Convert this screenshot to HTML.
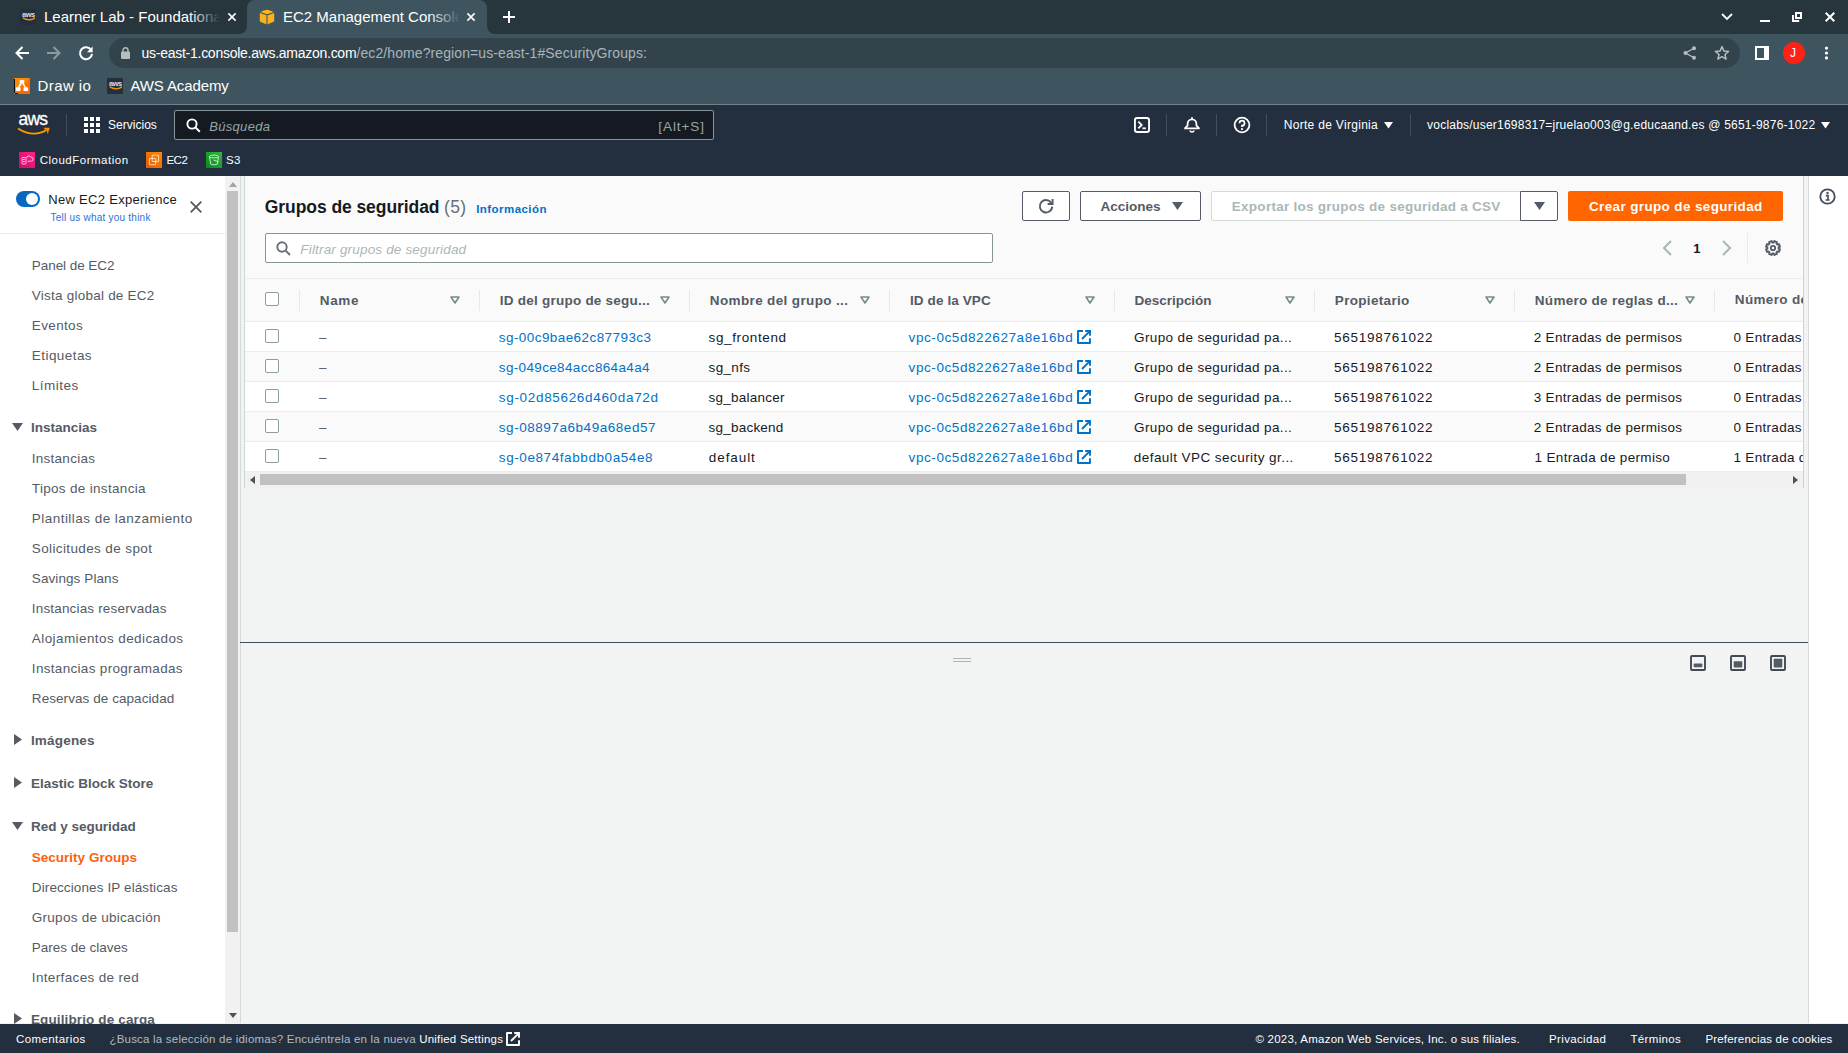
<!DOCTYPE html>
<html lang="es">
<head>
<meta charset="utf-8">
<title>EC2 Management Console</title>
<style>
*{box-sizing:border-box;margin:0;padding:0}
html,body{width:1848px;height:1053px;overflow:hidden;background:#f2f3f3}
body{font-family:"Liberation Sans",sans-serif;position:relative;color:#16191f}
.abs{position:absolute}
.t{position:absolute;white-space:nowrap;line-height:1}
svg{position:absolute;overflow:visible}
/* ---------- Chrome ---------- */
#tabbar{left:0;top:0;width:1848px;height:34px;background:#27353c}
#toolbar{left:0;top:34px;width:1848px;height:70px;background:#3e5560}
#tbline{left:0;top:104px;width:1848px;height:1px;background:#6d838c}
#acttab{left:247px;top:0;width:240px;height:34px;background:#3e5560;border-radius:8px 8px 0 0}
#omni{left:109px;top:38px;width:1631px;height:30px;border-radius:15px;background:#33434b}
.ct{color:#fff;font-size:15px}
/* ---------- AWS nav ---------- */
#awsnav{left:0;top:105px;width:1848px;height:71px;background:#232f3e}
#search{left:174px;top:110px;width:540px;height:30px;background:#151a22;border:1px solid #879596;border-radius:2px}
.nt{color:#fff;font-size:12px}
/* ---------- Sidebar ---------- */
#side{left:0;top:176px;width:225px;height:847px;background:#fff}
#sbar{left:225px;top:177px;width:15px;height:847px;background:#f1f1f1}
#sthumb{left:227px;top:191px;width:11px;height:741px;background:#c1c1c1}
.sl{left:32px;font-size:13.5px;color:#545b64}
.sh{left:31px;font-size:13.5px;color:#545b64;font-weight:bold}
/* ---------- Content ---------- */
#tools{left:1808px;top:176px;width:40px;height:847px;background:#fff;border-left:1px solid #d5dbdb}
#footer{left:0;top:1024px;width:1848px;height:29px;background:#232f3e}
.ft{color:#fff;font-size:12px;top:1033px}
.row{left:245px;width:1562px;height:30px;border-top:1px solid #eaeded}
.c{font-size:13.5px;color:#16191f}
.lk{color:#0071c9}
.h{font-size:13.5px;font-weight:bold;color:#545b64;top:293px}
.sep{width:1px;height:21px;top:290px;background:#e6eaea}
.cb{left:265px;width:14px;height:14px;border:1px solid #8a9e9e;border-radius:2px;background:#fff}
</style>
</head>
<body>
<!-- ======= Chrome browser ======= -->
<div class="abs" id="tabbar"></div>
<div class="abs" id="toolbar"></div>
<div class="abs" id="tbline"></div>
<div class="abs" id="acttab"></div>
<div class="abs" id="omni"></div>
<!--CHROME_S-->
<!-- tab 1 -->
<div class="abs" style="left:20px;top:9px;width:16px;height:16px;background:#232f3e;border-radius:1px"></div>
<div class="t" style="left:22px;top:10.7px;font-size:7.5px;font-weight:bold;color:#d9dde2;letter-spacing:-.45px">aws</div>
<svg style="left:21.5px;top:17.3px" width="14" height="4" viewBox="0 0 14 4"><path d="M0.8 0.9 Q6.5 4.6 12.4 1.3" fill="none" stroke="#e8910c" stroke-width="1.5"/><circle cx="12.2" cy="1.2" r=".9" fill="#e8910c"/></svg>
<div class="abs" style="left:44px;top:5px;width:176px;height:24px;overflow:hidden"><div class="t ct" id="tab1t" style="left:0;top:4px">Learner Lab - Foundational Services</div></div>
<div class="abs" style="left:190px;top:5px;width:30px;height:24px;background:linear-gradient(90deg,rgba(39,53,60,0),#27353c)"></div>
<svg style="left:227px;top:12px" width="10" height="10" viewBox="0 0 10 10"><path d="M1.4 1.4 L8.6 8.6 M8.6 1.4 L1.4 8.6" stroke="#fff" stroke-width="1.6" fill="none"/></svg>
<!-- tab 2 (active) -->
<svg style="left:259px;top:9px" width="16" height="16" viewBox="0 0 16 16"><path d="M8 0.8 Q12 1.4 14.6 3.1 L8 5.3 L1.4 3.1 Q4 1.4 8 0.8Z" fill="#ffb907"/><path d="M0.8 3.9 L7.3 6.2 V15.2 L0.8 12.4Z" fill="#fcb11f"/><path d="M15.2 3.9 L8.7 6.2 V15.2 L15.2 12.4Z" fill="#fcb11f"/><path d="M7.3 6.2 h1.4 v9 h-1.4z" fill="#958a47"/></svg>
<div class="abs" style="left:283px;top:5px;width:177px;height:24px;overflow:hidden"><div class="t ct" id="tab2t" style="left:0;top:4px">EC2 Management Console</div></div>
<div class="abs" style="left:430px;top:5px;width:30px;height:24px;background:linear-gradient(90deg,rgba(62,85,96,0),#3e5560)"></div>
<svg style="left:466px;top:12px" width="10" height="10" viewBox="0 0 10 10"><path d="M1.4 1.4 L8.6 8.6 M8.6 1.4 L1.4 8.6" stroke="#fff" stroke-width="1.6" fill="none"/></svg>
<!-- tab corner flares -->
<svg style="left:239px;top:26px" width="8" height="8" viewBox="0 0 8 8"><path d="M8 0 V8 H0 A8 8 0 0 0 8 0Z" fill="#3e5560"/></svg>
<svg style="left:487px;top:26px" width="8" height="8" viewBox="0 0 8 8"><path d="M0 0 V8 H8 A8 8 0 0 1 0 0Z" fill="#3e5560"/></svg>
<!-- new tab + -->
<svg style="left:503px;top:11px" width="12" height="12" viewBox="0 0 12 12"><path d="M6 0 V12 M0 6 H12" stroke="#fff" stroke-width="2" fill="none"/></svg>
<!-- window controls -->
<svg style="left:1721px;top:13px" width="12" height="8" viewBox="0 0 12 8"><path d="M1 1 L6 6 L11 1" stroke="#fff" stroke-width="1.8" fill="none"/></svg>
<div class="abs" style="left:1760px;top:20px;width:10px;height:2px;background:#fff"></div>
<svg style="left:1792px;top:12px" width="10" height="10" viewBox="0 0 10 10"><path d="M3 0 H10 V7 H3Z M5 2 V5 H8 V2Z" fill="#fff" fill-rule="evenodd"/><path d="M1 3 V9 H7.2" stroke="#fff" stroke-width="1.9" fill="none"/></svg>
<svg style="left:1825px;top:12px" width="10" height="10" viewBox="0 0 10 10"><path d="M0.7 0.7 L9.3 9.3 M9.3 0.7 L0.7 9.3" stroke="#fff" stroke-width="2" fill="none"/></svg>
<!-- nav buttons -->
<svg style="left:15px;top:46px" width="14" height="14" viewBox="0 0 14 14"><path d="M7.5 1 L1.5 7 L7.5 13 M1.5 7 H14" stroke="#fff" stroke-width="2" fill="none"/></svg>
<svg style="left:47px;top:46px" width="14" height="14" viewBox="0 0 14 14"><path d="M6.5 1 L12.5 7 L6.5 13 M12.5 7 H0" stroke="#8a9ba3" stroke-width="2" fill="none"/></svg>
<svg style="left:79px;top:46px" width="14" height="14" viewBox="0 0 14 14"><path d="M12.2 4.2 A6 6 0 1 0 13 7.8" stroke="#fff" stroke-width="2" fill="none"/><path d="M13.6 0.6 V6.2 H8Z" fill="#fff"/></svg>
<!-- lock -->
<svg style="left:121px;top:47px" width="9" height="12" viewBox="0 0 9 12"><rect x="0" y="4.5" width="9" height="7.5" rx="1" fill="#b6bec2"/><path d="M2 5 V3.2 A2.5 2.5 0 0 1 7 3.2 V5" stroke="#b6bec2" stroke-width="1.4" fill="none"/></svg>
<div class="t" id="url" style="left:141.6px;top:46.01px;font-size:14px;color:#fff;letter-spacing:-0.270px">us-east-1.console.aws.amazon.com</div>
<div class="t" id="url2" style="left:356.5px;top:46.01px;font-size:14px;color:#a9b5bb;letter-spacing:0.090px">/ec2/home?region=us-east-1#SecurityGroups:</div>
<!-- share -->
<svg style="left:1683px;top:46px" width="14" height="14" viewBox="0 0 14 14"><circle cx="2.5" cy="7" r="2" fill="#b6bec2"/><circle cx="11" cy="2.3" r="2" fill="#b6bec2"/><circle cx="11" cy="11.7" r="2" fill="#b6bec2"/><path d="M11 2.3 L2.5 7 L11 11.7" stroke="#b6bec2" stroke-width="1.3" fill="none"/></svg>
<!-- star -->
<svg style="left:1714px;top:45px" width="16" height="16" viewBox="0 0 16 16"><path d="M8 1.6 L9.9 6 L14.6 6.4 L11 9.5 L12.1 14.1 L8 11.7 L3.9 14.1 L5 9.5 L1.4 6.4 L6.1 6Z" stroke="#b6bec2" stroke-width="1.5" fill="none" stroke-linejoin="round"/></svg>
<!-- side panel -->
<svg style="left:1755px;top:46px" width="14" height="14" viewBox="0 0 14 14"><path d="M0 0 H14 V14 H0Z M2 2 V12 H9 V2Z" fill="#fff" fill-rule="evenodd"/></svg>
<!-- avatar -->
<div class="abs" style="left:1783px;top:42px;width:22px;height:22px;border-radius:11px;background:#ff2116"></div>
<div class="t" style="left:1790px;top:47px;font-size:12px;color:#fff">J</div>
<!-- menu dots -->
<svg style="left:1824px;top:46px" width="5" height="14" viewBox="0 0 5 14"><circle cx="2.5" cy="2.1" r="1.6" fill="#fff"/><circle cx="2.5" cy="7" r="1.6" fill="#fff"/><circle cx="2.5" cy="11.9" r="1.6" fill="#fff"/></svg>
<!-- bookmarks -->
<div class="abs" style="left:14px;top:78px;width:16px;height:16px;background:linear-gradient(135deg,#ff8c00 40%,#ff6a00 60%)"></div>
<div class="abs" style="left:14px;top:79px;width:1px;height:14px;background:#0a0a0a"></div>
<div class="abs" style="left:15px;top:93px;width:3px;height:1px;background:#0a0a0a"></div>
<svg style="left:14px;top:78px" width="16" height="16" viewBox="0 0 16 16"><rect x="5.7" y="2" width="4.6" height="3.8" rx=".7" fill="#fff"/><rect x="1.9" y="9.3" width="4.6" height="3.8" rx=".7" fill="#fff"/><rect x="9.5" y="9.3" width="4.6" height="3.8" rx=".7" fill="#fff"/><path d="M7.2 5.4 L4.4 9.6 M8.8 5.4 L11.6 9.6" stroke="#fff" stroke-width="1.5"/></svg>
<div class="t ct" id="bm1" style="left:37.55px;top:78.01px;font-size:15px;letter-spacing:0.415px">Draw io</div>
<div class="abs" style="left:107px;top:78px;width:16px;height:16px;background:#232f3e;border-radius:1px"></div>
<div class="t" style="left:109px;top:79.7px;font-size:7.5px;font-weight:bold;color:#d9dde2;letter-spacing:-.45px">aws</div>
<svg style="left:108.5px;top:86.3px" width="14" height="4" viewBox="0 0 14 4"><path d="M0.8 0.9 Q6.5 4.6 12.4 1.3" fill="none" stroke="#e8910c" stroke-width="1.5"/><circle cx="12.2" cy="1.2" r=".9" fill="#e8910c"/></svg>
<div class="t ct" id="bm2" style="left:130.45px;top:78.01px;font-size:15px;letter-spacing:-0.113px">AWS Academy</div>
<!--CHROME_E-->
<!-- ======= AWS nav ======= -->
<div class="abs" id="awsnav"></div>
<div class="abs" id="search"></div>
<!--AWSNAV_S-->
<!-- aws logo -->
<div class="t" id="awslogo" style="left:18.6px;top:110.8px;font-size:17.5px;color:#fff;letter-spacing:-.8px;-webkit-text-stroke:.3px #fff">aws</div>
<svg style="left:17px;top:126px" width="34" height="10" viewBox="0 0 34 10"><path d="M1 2.4 Q9 7.6 17 7.6 Q24 7.6 29.3 4" fill="none" stroke="#f90" stroke-width="1.8"/><path d="M26.8 2.2 L32.3 2 L30.6 7.3 L30.2 4.2 Z" fill="#f90" stroke="#f90" stroke-width=".6" stroke-linejoin="round"/></svg>
<div class="abs" style="left:66px;top:114px;width:1px;height:22px;background:#414d5c"></div>
<!-- grid -->
<svg style="left:84px;top:117px" width="16" height="16" viewBox="0 0 16 16"><g fill="#fff"><rect x="0" y="0" width="4" height="4"/><rect x="6" y="0" width="4" height="4"/><rect x="12" y="0" width="4" height="4"/><rect x="0" y="6" width="4" height="4"/><rect x="6" y="6" width="4" height="4"/><rect x="12" y="6" width="4" height="4"/><rect x="0" y="12" width="4" height="4"/><rect x="6" y="12" width="4" height="4"/><rect x="12" y="12" width="4" height="4"/></g></svg>
<div class="t nt" id="servicios" style="left:107.9px;top:119.01px;font-size:12px;letter-spacing:0.037px">Servicios</div>
<!-- search -->
<svg style="left:186px;top:118px" width="15" height="15" viewBox="0 0 15 15"><circle cx="6" cy="6" r="4.6" stroke="#fff" stroke-width="1.9" fill="none"/><path d="M9.4 9.4 L13.8 13.8" stroke="#fff" stroke-width="2"/></svg>
<div class="t" id="busq" style="left:209.35px;top:120.00px;font-size:13px;font-style:italic;color:#95a5a6;letter-spacing:0.287px">Búsqueda</div>
<div class="t" id="alts" style="left:658.33px;top:120.01px;font-size:13.5px;color:#95a5a6;letter-spacing:0.926px">[Alt+S]</div>
<!-- right icons -->
<svg style="left:1134px;top:117px" width="16" height="16" viewBox="0 0 17 17"><rect x="1" y="1" width="15" height="15" rx="2.5" stroke="#fff" stroke-width="2" fill="none"/><path d="M4.6 4.8 L8.2 8.4 L4.6 12" stroke="#fff" stroke-width="1.9" fill="none"/><path d="M9 12 H12.6" stroke="#fff" stroke-width="1.9"/></svg>
<div class="abs" style="left:1166px;top:114px;width:1px;height:22px;background:#414d5c"></div>
<svg style="left:1183px;top:116px" width="18" height="18" viewBox="0 0 18 18"><path d="M2 12.4 L4.6 9.4 V7.8 A4.4 4.4 0 0 1 13.4 7.8 V9.4 L16 12.4 Z" stroke="#fff" stroke-width="1.8" fill="none" stroke-linejoin="round"/><path d="M9 1.2 V3.6" stroke="#fff" stroke-width="1.8"/><path d="M6.9 14.4 A2.2 2.2 0 0 0 11.1 14.4" stroke="#fff" stroke-width="1.6" fill="none"/></svg>
<div class="abs" style="left:1216px;top:114px;width:1px;height:22px;background:#414d5c"></div>
<svg style="left:1233px;top:116px" width="18" height="18" viewBox="0 0 18 18"><circle cx="9" cy="9" r="7.4" stroke="#fff" stroke-width="1.8" fill="none"/><path d="M6.5 7.2 A2.5 2.5 0 1 1 9 9.7 V11" stroke="#fff" stroke-width="1.7" fill="none"/><circle cx="9" cy="13.1" r="1.1" fill="#fff"/></svg>
<div class="abs" style="left:1266px;top:114px;width:1px;height:22px;background:#414d5c"></div>
<div class="t nt" id="region" style="left:1283.7px;top:119.02px;font-size:12px;letter-spacing:0.307px">Norte de Virginia</div>
<svg style="left:1384px;top:122px" width="9" height="7" viewBox="0 0 9 7"><path d="M0 0 H9 L4.5 6.5Z" fill="#fff"/></svg>
<div class="abs" style="left:1410px;top:114px;width:1px;height:22px;background:#414d5c"></div>
<div class="t nt" id="user" style="left:1427.1px;top:119.02px;font-size:12px;letter-spacing:0.217px">voclabs/user1698317=jruelao003@g.educaand.es @ 5651-9876-1022</div>
<svg style="left:1821px;top:122px" width="9" height="7" viewBox="0 0 9 7"><path d="M0 0 H9 L4.5 6.5Z" fill="#fff"/></svg>
<!-- favorites -->
<div class="abs" style="left:19px;top:152px;width:16px;height:16px;background:linear-gradient(45deg,#d4076b,#ff2388)"></div>
<svg style="left:19px;top:152px" width="16" height="16" viewBox="0 0 16 16"><g stroke="#fff" stroke-opacity=".85" stroke-width=".85" fill="none"><rect x="3" y="5.5" width="4" height="6.5" rx=".5"/><path d="M4 7.5 h2 M4 9.5 h2"/><path d="M7.5 6 A2.4 2.4 0 0 1 12 5.2 A2 2 0 0 1 12.2 9.2 H8.6"/></g></svg>
<div class="t nt" id="cf" style="left:39.72px;top:155.01px;font-size:11.5px;letter-spacing:0.501px">CloudFormation</div>
<div class="abs" style="left:146px;top:152px;width:16px;height:16px;background:linear-gradient(45deg,#e65a05,#ff8a00)"></div>
<svg style="left:146px;top:152px" width="16" height="16" viewBox="0 0 16 16"><g stroke="#fff" stroke-opacity=".85" stroke-width=".85" fill="none"><rect x="6.2" y="3.2" width="6.3" height="6.3" rx=".5"/><rect x="3.4" y="6.4" width="6.3" height="6.3" rx=".5"/></g></svg>
<div class="t nt" id="ec2" style="left:166.43px;top:155.01px;font-size:11.5px;letter-spacing:-0.470px">EC2</div>
<div class="abs" style="left:206px;top:152px;width:16px;height:16px;background:linear-gradient(45deg,#088a1c,#31b63c)"></div>
<svg style="left:206px;top:152px" width="16" height="16" viewBox="0 0 16 16"><g stroke="#fff" stroke-opacity=".85" stroke-width=".85" fill="none"><path d="M3.5 4.5 L4.7 12.2 Q8 13.6 11.3 12.2 L12.5 4.5"/><ellipse cx="8" cy="4.5" rx="4.5" ry="1.4"/><path d="M7.5 8 L12.5 9.8"/></g></svg>
<div class="t nt" id="s3" style="left:226.03px;top:155.01px;font-size:11.5px;letter-spacing:0.357px">S3</div>
<!--AWSNAV_E-->
<!-- ======= Sidebar ======= -->
<div class="abs" id="side"></div>
<div class="abs" id="sbar"></div>
<div class="abs" id="sthumb"></div>
<!--SIDE_S-->
<div class="abs" style="left:16px;top:191px;width:24px;height:16px;border-radius:8px;background:#0669bf"></div>
<div class="abs" style="left:26px;top:193px;width:12px;height:12px;border-radius:6px;background:#fff"></div>
<div class="t" id="newexp" style="left:48.35px;top:193.01px;font-size:13px;color:#16191f;letter-spacing:0.289px">New EC2 Experience</div>
<div class="t" id="tellus" style="left:50.5px;top:213.01px;font-size:10px;color:#2e6fd9;letter-spacing:0.230px">Tell us what you think</div>
<svg style="left:190px;top:201px" width="12" height="12" viewBox="0 0 12 12"><path d="M0.7 0.7 L11.3 11.3 M11.3 0.7 L0.7 11.3" stroke="#545b64" stroke-width="1.8" fill="none"/></svg>
<div class="abs" style="left:0;top:233px;width:226px;height:1px;background:#eaeded"></div>
<div class="t sl" id="sl0" style="top:259.00px;font-size:13.5px;letter-spacing:-0.063px;left:31.82px">Panel de EC2</div>
<div class="t sl" id="sl1" style="top:289.00px;font-size:13.5px;letter-spacing:0.232px;left:31.82px">Vista global de EC2</div>
<div class="t sl" id="sl2" style="top:319.00px;font-size:13.5px;letter-spacing:0.356px;left:31.82px">Eventos</div>
<div class="t sl" id="sl3" style="top:349.00px;font-size:13.5px;letter-spacing:0.440px;left:31.82px">Etiquetas</div>
<div class="t sl" id="sl4" style="top:379.00px;font-size:13.5px;letter-spacing:0.500px;left:31.82px">Límites</div>
<div class="t sl" id="sl5" style="top:452.00px;font-size:13.5px;letter-spacing:0.258px;left:31.82px">Instancias</div>
<div class="t sl" id="sl6" style="top:482.00px;font-size:13.5px;letter-spacing:0.318px;left:31.82px">Tipos de instancia</div>
<div class="t sl" id="sl7" style="top:512.00px;font-size:13.5px;letter-spacing:0.465px;left:31.82px">Plantillas de lanzamiento</div>
<div class="t sl" id="sl8" style="top:542.00px;font-size:13.5px;letter-spacing:0.377px;left:31.82px">Solicitudes de spot</div>
<div class="t sl" id="sl9" style="top:572.00px;font-size:13.5px;letter-spacing:0.088px;left:31.82px">Savings Plans</div>
<div class="t sl" id="sl10" style="top:602.00px;font-size:13.5px;letter-spacing:0.169px;left:31.82px">Instancias reservadas</div>
<div class="t sl" id="sl11" style="top:632.00px;font-size:13.5px;letter-spacing:0.415px;left:31.82px">Alojamientos dedicados</div>
<div class="t sl" id="sl12" style="top:662.00px;font-size:13.5px;letter-spacing:0.316px;left:31.82px">Instancias programadas</div>
<div class="t sl" id="sl13" style="top:692.00px;font-size:13.5px;letter-spacing:0.066px;left:31.82px">Reservas de capacidad</div>
<div class="t sl" id="sl14" style="top:881.00px;font-size:13.5px;letter-spacing:0.111px;left:31.82px">Direcciones IP elásticas</div>
<div class="t sl" id="sl15" style="top:911.00px;font-size:13.5px;letter-spacing:0.266px;left:31.82px">Grupos de ubicación</div>
<div class="t sl" id="sl16" style="top:941.00px;font-size:13.5px;letter-spacing:-0.011px;left:31.82px">Pares de claves</div>
<div class="t sl" id="sl17" style="top:971.00px;font-size:13.5px;letter-spacing:0.350px;left:31.82px">Interfaces de red</div>
<div class="t sl" id="slsg" style="top:851.01px;color:#fd5f0e;font-weight:bold;letter-spacing:0.006px;font-size:13.5px;left:31.82px">Security Groups</div>
<svg style="left:12px;top:423px" width="11" height="8" viewBox="0 0 11 8"><path d="M0 0 H11 L5.5 8Z" fill="#545b64"/></svg>
<div class="t sh" id="sh0" style="top:421.00px;font-size:13.5px;letter-spacing:-0.002px;left:30.93px">Instancias</div>
<svg style="left:14px;top:734px" width="8" height="11" viewBox="0 0 8 11"><path d="M0 0 V11 L8 5.5Z" fill="#545b64"/></svg>
<div class="t sh" id="sh1" style="top:734.00px;font-size:13.5px;letter-spacing:0.191px;left:30.93px">Imágenes</div>
<svg style="left:14px;top:777px" width="8" height="11" viewBox="0 0 8 11"><path d="M0 0 V11 L8 5.5Z" fill="#545b64"/></svg>
<div class="t sh" id="sh2" style="top:777.00px;font-size:13.5px;letter-spacing:0.000px;left:30.93px">Elastic Block Store</div>
<svg style="left:12px;top:822px" width="11" height="8" viewBox="0 0 11 8"><path d="M0 0 H11 L5.5 8Z" fill="#545b64"/></svg>
<div class="t sh" id="sh3" style="top:820.00px;font-size:13.5px;letter-spacing:-0.008px;left:30.93px">Red y seguridad</div>
<svg style="left:14px;top:1013px" width="8" height="11" viewBox="0 0 8 11"><path d="M0 0 V11 L8 5.5Z" fill="#545b64"/></svg>
<div class="t sh" id="sh4" style="top:1013.00px;font-size:13.5px;letter-spacing:0.132px;left:30.93px">Equilibrio de carga</div>
<svg style="left:229px;top:182px" width="8" height="5" viewBox="0 0 8 5"><path d="M0 5 H8 L4 0Z" fill="#a3a3a3"/></svg>
<svg style="left:229px;top:1013px" width="8" height="5" viewBox="0 0 8 5"><path d="M0 0 H8 L4 5Z" fill="#505050"/></svg>
<!--SIDE_E-->
<!-- ======= Content ======= -->
<!--CONTENT_S-->
<div class="abs" style="left:240px;top:176px;width:1px;height:847px;background:#d5dbdb"></div>
<div class="abs" id="tcont" style="left:244px;top:176px;width:1560px;height:312px;background:#fafafa;border-left:1px solid #d0d6d6;border-right:1px solid #cdd3d3;overflow:hidden">
</div>
<div class="t" id="title" style="left:264.82px;top:199.00px;font-size:17.5px;font-weight:bold;color:#16191f;letter-spacing:-0.074px">Grupos de seguridad</div>
<div class="t" id="cnt" style="left:444.12px;top:199.00px;font-size:17.5px;color:#687078;letter-spacing:0.292px">(5)</div>
<div class="t" id="info" style="left:476.23px;top:204.01px;font-size:11.5px;font-weight:bold;color:#0071c9;letter-spacing:0.442px">Información</div>
<div class="abs" style="left:1022px;top:191px;width:48px;height:30px;border:1px solid #545b64;border-radius:2px;background:#fff"></div>
<svg style="left:1038px;top:198px" width="16" height="16" viewBox="0 0 16 16"><path d="M13.4 5.2 A6.2 6.2 0 1 0 14.2 8.6" stroke="#545b64" stroke-width="1.9" fill="none"/><path d="M14.6 1 V6 H9.6" stroke="#545b64" stroke-width="1.9" fill="none"/></svg>
<div class="abs" style="left:1080px;top:191px;width:121px;height:30px;border:1px solid #545b64;border-radius:2px;background:#fff"></div>
<div class="t" id="acc" style="left:1100.58px;top:200.01px;font-size:13.5px;font-weight:bold;color:#545b64;letter-spacing:-0.009px">Acciones</div>
<svg style="left:1172px;top:202px" width="11" height="8" viewBox="0 0 11 8"><path d="M0 0 H11 L5.5 8Z" fill="#545b64"/></svg>
<div class="abs" style="left:1211px;top:191px;width:310px;height:30px;border:1px solid #d5dbdb;border-radius:2px 0 0 2px;background:#fff"></div>
<div class="t" id="exp" style="left:1231.83px;top:200.01px;font-size:13.5px;font-weight:bold;color:#aab7b8;letter-spacing:0.262px">Exportar los grupos de seguridad a CSV</div>
<div class="abs" style="left:1520px;top:191px;width:38px;height:30px;border:1px solid #545b64;border-radius:0 2px 2px 0;background:#fff"></div>
<svg style="left:1534px;top:202px" width="11" height="8" viewBox="0 0 11 8"><path d="M0 0 H11 L5.5 8Z" fill="#545b64"/></svg>
<div class="abs" style="left:1568px;top:191px;width:215px;height:30px;border-radius:2px;background:#ff6500"></div>
<div class="t" id="crear" style="left:1589.03px;top:200.01px;font-size:13.5px;font-weight:bold;color:#fff;letter-spacing:0.359px">Crear grupo de seguridad</div>
<div class="abs" style="left:265px;top:233px;width:728px;height:30px;border:1px solid #879596;border-radius:2px;background:#fff"></div>
<svg style="left:276px;top:241px" width="15" height="15" viewBox="0 0 15 15"><circle cx="6" cy="6" r="4.7" stroke="#687078" stroke-width="1.9" fill="none"/><path d="M9.4 9.4 L14 14" stroke="#687078" stroke-width="2"/></svg>
<div class="t" id="filt" style="left:300.32px;top:243.00px;font-size:13.5px;font-style:italic;color:#aab7b8;letter-spacing:0.172px">Filtrar grupos de seguridad</div>
<svg style="left:1662px;top:240px" width="10" height="16" viewBox="0 0 10 16"><path d="M9 1 L2 8 L9 15" stroke="#aab7b8" stroke-width="2.1" fill="none"/></svg>
<div class="t" id="pg1" style="left:1693.35px;top:242.00px;font-size:13px;font-weight:bold;color:#16191f;letter-spacing:0">1</div>
<svg style="left:1722px;top:240px" width="10" height="16" viewBox="0 0 10 16"><path d="M1 1 L8 8 L1 15" stroke="#aab7b8" stroke-width="2.1" fill="none"/></svg>
<div class="abs" style="left:1747px;top:233px;width:1px;height:30px;background:#eaeded"></div>
<svg style="left:1764px;top:239px" width="18" height="18" viewBox="0 0 18 18"><path d="M14.56 9.68 L15.96 10.42 L14.92 12.92 L13.41 12.45 L12.45 13.41 L12.92 14.92 L10.42 15.96 L9.68 14.56 L8.32 14.56 L7.58 15.96 L5.08 14.92 L5.55 13.41 L4.59 12.45 L3.08 12.92 L2.04 10.42 L3.44 9.68 L3.44 8.32 L2.04 7.58 L3.08 5.08 L4.59 5.55 L5.55 4.59 L5.08 3.08 L7.58 2.04 L8.32 3.44 L9.68 3.44 L10.42 2.04 L12.92 3.08 L12.45 4.59 L13.41 5.55 L14.92 5.08 L15.96 7.58 L14.56 8.32Z" stroke="#545b64" stroke-width="1.9" fill="none" stroke-linejoin="round"/><circle cx="9" cy="9" r="2.2" stroke="#545b64" stroke-width="1.8" fill="none"/></svg>
<div class="abs" style="left:245px;top:278px;width:1558px;height:1px;background:#eaeded"></div>
<div class="abs" style="left:245px;top:321px;width:1558px;height:1px;background:#eaeded"></div>
<div class="abs" style="left:245px;top:322px;width:1558px;height:30px;background:#fff;border-bottom:1px solid #eaeded"></div>
<div class="abs" style="left:245px;top:352px;width:1558px;height:30px;background:#fafafa;border-bottom:1px solid #eaeded"></div>
<div class="abs" style="left:245px;top:382px;width:1558px;height:30px;background:#fff;border-bottom:1px solid #eaeded"></div>
<div class="abs" style="left:245px;top:412px;width:1558px;height:30px;background:#fafafa;border-bottom:1px solid #eaeded"></div>
<div class="abs" style="left:245px;top:442px;width:1558px;height:30px;background:#fff;border-bottom:1px solid #eaeded"></div>
<div class="abs cb" style="top:292px"></div>
<div class="abs sep" style="left:299px"></div>
<div class="abs sep" style="left:479px"></div>
<div class="abs sep" style="left:689px"></div>
<div class="abs sep" style="left:889px"></div>
<div class="abs sep" style="left:1114px"></div>
<div class="abs sep" style="left:1314px"></div>
<div class="abs sep" style="left:1514px"></div>
<div class="abs sep" style="left:1714px"></div>
<div class="t h" id="h0" style="left:319.82px;font-size:13.5px;letter-spacing:0.645px;top:294.01px">Name</div>
<div class="t h" id="h1" style="left:499.82px;font-size:13.5px;letter-spacing:0.236px;top:294.01px">ID del grupo de segu...</div>
<div class="t h" id="h2" style="left:709.83px;font-size:13.5px;letter-spacing:0.360px;top:294.01px">Nombre del grupo ...</div>
<div class="t h" id="h3" style="left:909.93px;font-size:13.5px;letter-spacing:0.117px;top:294.01px">ID de la VPC</div>
<div class="t h" id="h4" style="left:1134.58px;font-size:13.5px;letter-spacing:-0.032px;top:294.01px">Descripción</div>
<div class="t h" id="h5" style="left:1334.83px;font-size:13.5px;letter-spacing:0.320px;top:294.01px">Propietario</div>
<div class="t h" id="h6" style="left:1534.83px;font-size:13.5px;letter-spacing:0.283px;top:294.01px">Número de reglas d...</div>
<div class="abs" style="left:1735px;top:288px;width:68px;height:24px;overflow:hidden"><div class="t h" id="h7" style="left:-0.2px;top:5.3px;letter-spacing:.33px">Número de reglas</div></div>
<svg style="left:450px;top:296px" width="10" height="8" viewBox="0 0 10 8"><path d="M1 1 H9 L5 7Z" stroke="#7a8b8b" stroke-width="1.6" fill="none" stroke-linejoin="round"/></svg>
<svg style="left:660px;top:296px" width="10" height="8" viewBox="0 0 10 8"><path d="M1 1 H9 L5 7Z" stroke="#7a8b8b" stroke-width="1.6" fill="none" stroke-linejoin="round"/></svg>
<svg style="left:860px;top:296px" width="10" height="8" viewBox="0 0 10 8"><path d="M1 1 H9 L5 7Z" stroke="#7a8b8b" stroke-width="1.6" fill="none" stroke-linejoin="round"/></svg>
<svg style="left:1085px;top:296px" width="10" height="8" viewBox="0 0 10 8"><path d="M1 1 H9 L5 7Z" stroke="#7a8b8b" stroke-width="1.6" fill="none" stroke-linejoin="round"/></svg>
<svg style="left:1285px;top:296px" width="10" height="8" viewBox="0 0 10 8"><path d="M1 1 H9 L5 7Z" stroke="#7a8b8b" stroke-width="1.6" fill="none" stroke-linejoin="round"/></svg>
<svg style="left:1485px;top:296px" width="10" height="8" viewBox="0 0 10 8"><path d="M1 1 H9 L5 7Z" stroke="#7a8b8b" stroke-width="1.6" fill="none" stroke-linejoin="round"/></svg>
<svg style="left:1685px;top:296px" width="10" height="8" viewBox="0 0 10 8"><path d="M1 1 H9 L5 7Z" stroke="#7a8b8b" stroke-width="1.6" fill="none" stroke-linejoin="round"/></svg>
<div class="abs cb" style="top:329px"></div>
<div class="t c" style="left:319px;top:331px;color:#545b64">–</div>
<div class="t c lk" id="r0a" style="left:498.82px;top:331.01px;font-size:13.5px;letter-spacing:0.426px">sg-00c9bae62c87793c3</div>
<div class="t c" id="r0b" style="left:708.58px;top:331.01px;font-size:13.5px;letter-spacing:0.615px">sg_frontend</div>
<div class="t c lk" id="r0c" style="left:908.58px;top:331.01px;font-size:13.5px;letter-spacing:0.584px">vpc-0c5d822627a8e16bd</div>
<svg style="left:1077px;top:330px" width="14" height="14" viewBox="0 0 14 14"><path d="M6 1 H1 V13 H13 V8.2" stroke="#0071c9" stroke-width="1.9" fill="none" stroke-linejoin="round"/><path d="M8.2 1 H13 V5.8 M12.6 1.4 L5 9" stroke="#0071c9" stroke-width="1.9" fill="none"/></svg>
<div class="t c" id="r0d" style="left:1134.08px;top:331.01px;font-size:13.5px;letter-spacing:0.363px">Grupo de seguridad pa...</div>
<div class="t c" id="r0e" style="left:1333.92px;top:331.01px;font-size:13.5px;letter-spacing:0.773px">565198761022</div>
<div class="t c" id="r0f" style="left:1533.83px;top:331.01px;font-size:13.5px;letter-spacing:0.268px">2 Entradas de permisos</div>
<div class="abs" style="left:1734px;top:324px;width:69px;height:26px;overflow:hidden"><div class="t c" id="r0g" style="left:-0.5px;top:6.6px;letter-spacing:.3px">0 Entradas de permisos</div></div>
<div class="abs cb" style="top:359px"></div>
<div class="t c" style="left:319px;top:361px;color:#545b64">–</div>
<div class="t c lk" id="r1a" style="left:498.82px;top:361.01px;font-size:13.5px;letter-spacing:0.347px">sg-049ce84acc864a4a4</div>
<div class="t c" id="r1b" style="left:708.58px;top:361.01px;font-size:13.5px;letter-spacing:0.337px">sg_nfs</div>
<div class="t c lk" id="r1c" style="left:908.58px;top:361.01px;font-size:13.5px;letter-spacing:0.584px">vpc-0c5d822627a8e16bd</div>
<svg style="left:1077px;top:360px" width="14" height="14" viewBox="0 0 14 14"><path d="M6 1 H1 V13 H13 V8.2" stroke="#0071c9" stroke-width="1.9" fill="none" stroke-linejoin="round"/><path d="M8.2 1 H13 V5.8 M12.6 1.4 L5 9" stroke="#0071c9" stroke-width="1.9" fill="none"/></svg>
<div class="t c" id="r1d" style="left:1134.08px;top:361.01px;font-size:13.5px;letter-spacing:0.363px">Grupo de seguridad pa...</div>
<div class="t c" id="r1e" style="left:1333.92px;top:361.01px;font-size:13.5px;letter-spacing:0.773px">565198761022</div>
<div class="t c" id="r1f" style="left:1533.83px;top:361.01px;font-size:13.5px;letter-spacing:0.268px">2 Entradas de permisos</div>
<div class="abs" style="left:1734px;top:354px;width:69px;height:26px;overflow:hidden"><div class="t c" id="r1g" style="left:-0.5px;top:6.6px;letter-spacing:.3px">0 Entradas de permisos</div></div>
<div class="abs cb" style="top:389px"></div>
<div class="t c" style="left:319px;top:391px;color:#545b64">–</div>
<div class="t c lk" id="r2a" style="left:498.82px;top:391.01px;font-size:13.5px;letter-spacing:0.675px">sg-02d85626d460da72d</div>
<div class="t c" id="r2b" style="left:708.58px;top:391.01px;font-size:13.5px;letter-spacing:0.240px">sg_balancer</div>
<div class="t c lk" id="r2c" style="left:908.58px;top:391.01px;font-size:13.5px;letter-spacing:0.584px">vpc-0c5d822627a8e16bd</div>
<svg style="left:1077px;top:390px" width="14" height="14" viewBox="0 0 14 14"><path d="M6 1 H1 V13 H13 V8.2" stroke="#0071c9" stroke-width="1.9" fill="none" stroke-linejoin="round"/><path d="M8.2 1 H13 V5.8 M12.6 1.4 L5 9" stroke="#0071c9" stroke-width="1.9" fill="none"/></svg>
<div class="t c" id="r2d" style="left:1134.08px;top:391.01px;font-size:13.5px;letter-spacing:0.363px">Grupo de seguridad pa...</div>
<div class="t c" id="r2e" style="left:1333.92px;top:391.01px;font-size:13.5px;letter-spacing:0.773px">565198761022</div>
<div class="t c" id="r2f" style="left:1533.83px;top:391.01px;font-size:13.5px;letter-spacing:0.268px">3 Entradas de permisos</div>
<div class="abs" style="left:1734px;top:384px;width:69px;height:26px;overflow:hidden"><div class="t c" id="r2g" style="left:-0.5px;top:6.6px;letter-spacing:.3px">0 Entradas de permisos</div></div>
<div class="abs cb" style="top:419px"></div>
<div class="t c" style="left:319px;top:421px;color:#545b64">–</div>
<div class="t c lk" id="r3a" style="left:498.82px;top:421.01px;font-size:13.5px;letter-spacing:0.543px">sg-08897a6b49a68ed57</div>
<div class="t c" id="r3b" style="left:708.58px;top:421.01px;font-size:13.5px;letter-spacing:0.211px">sg_backend</div>
<div class="t c lk" id="r3c" style="left:908.58px;top:421.01px;font-size:13.5px;letter-spacing:0.584px">vpc-0c5d822627a8e16bd</div>
<svg style="left:1077px;top:420px" width="14" height="14" viewBox="0 0 14 14"><path d="M6 1 H1 V13 H13 V8.2" stroke="#0071c9" stroke-width="1.9" fill="none" stroke-linejoin="round"/><path d="M8.2 1 H13 V5.8 M12.6 1.4 L5 9" stroke="#0071c9" stroke-width="1.9" fill="none"/></svg>
<div class="t c" id="r3d" style="left:1134.08px;top:421.01px;font-size:13.5px;letter-spacing:0.363px">Grupo de seguridad pa...</div>
<div class="t c" id="r3e" style="left:1333.92px;top:421.01px;font-size:13.5px;letter-spacing:0.773px">565198761022</div>
<div class="t c" id="r3f" style="left:1533.83px;top:421.01px;font-size:13.5px;letter-spacing:0.268px">2 Entradas de permisos</div>
<div class="abs" style="left:1734px;top:414px;width:69px;height:26px;overflow:hidden"><div class="t c" id="r3g" style="left:-0.5px;top:6.6px;letter-spacing:.3px">0 Entradas de permisos</div></div>
<div class="abs cb" style="top:449px"></div>
<div class="t c" style="left:319px;top:451px;color:#545b64">–</div>
<div class="t c lk" id="r4a" style="left:498.82px;top:451.01px;font-size:13.5px;letter-spacing:0.583px">sg-0e874fabbdb0a54e8</div>
<div class="t c" id="r4b" style="left:708.83px;top:451.01px;font-size:13.5px;letter-spacing:0.903px">default</div>
<div class="t c lk" id="r4c" style="left:908.58px;top:451.01px;font-size:13.5px;letter-spacing:0.584px">vpc-0c5d822627a8e16bd</div>
<svg style="left:1077px;top:450px" width="14" height="14" viewBox="0 0 14 14"><path d="M6 1 H1 V13 H13 V8.2" stroke="#0071c9" stroke-width="1.9" fill="none" stroke-linejoin="round"/><path d="M8.2 1 H13 V5.8 M12.6 1.4 L5 9" stroke="#0071c9" stroke-width="1.9" fill="none"/></svg>
<div class="t c" id="r4d" style="left:1133.83px;top:451.01px;font-size:13.5px;letter-spacing:0.437px">default VPC security gr...</div>
<div class="t c" id="r4e" style="left:1333.92px;top:451.01px;font-size:13.5px;letter-spacing:0.773px">565198761022</div>
<div class="t c" id="r4f" style="left:1534.58px;top:451.01px;font-size:13.5px;letter-spacing:0.323px">1 Entrada de permiso</div>
<div class="abs" style="left:1734px;top:444px;width:69px;height:26px;overflow:hidden"><div class="t c" id="r4g" style="left:-0.5px;top:6.6px;letter-spacing:.3px">1 Entrada de permiso</div></div>
<div class="abs" style="left:245px;top:472px;width:1558px;height:16px;background:#f1f1f1"></div>
<div class="abs" style="left:260px;top:474px;width:1426px;height:11px;background:#c1c1c1"></div>
<svg style="left:250px;top:476px" width="5" height="8" viewBox="0 0 5 8"><path d="M5 0 V8 L0 4Z" fill="#505050"/></svg>
<svg style="left:1793px;top:476px" width="5" height="8" viewBox="0 0 5 8"><path d="M0 0 V8 L5 4Z" fill="#505050"/></svg>
<div class="abs" style="left:240px;top:642px;width:1568px;height:1px;background:#414d5c"></div>
<div class="abs" style="left:953px;top:658px;width:18px;height:1px;background:#aab7b8"></div>
<div class="abs" style="left:953px;top:661px;width:18px;height:1px;background:#aab7b8"></div>
<svg style="left:1690px;top:655px" width="16" height="16" viewBox="0 0 16 16"><rect x="1" y="1" width="14" height="14" rx="1" stroke="#434a54" stroke-width="1.9" fill="none"/><rect x="3.6" y="8.4" width="8.8" height="3.8" rx="1" fill="#545b64"/></svg>
<svg style="left:1730px;top:655px" width="16" height="16" viewBox="0 0 16 16"><rect x="1" y="1" width="14" height="14" rx="1" stroke="#434a54" stroke-width="1.9" fill="none"/><rect x="3.7" y="6.2" width="8.6" height="6.2" rx=".6" fill="#545b64"/></svg>
<svg style="left:1770px;top:655px" width="16" height="16" viewBox="0 0 16 16"><rect x="1" y="1" width="14" height="14" rx="1" stroke="#434a54" stroke-width="1.9" fill="none"/><rect x="3.7" y="3.8" width="8.6" height="8.6" rx=".6" fill="#545b64"/></svg>
<!--CONTENT_E-->
<div class="abs" id="tools"></div>
<svg style="left:1819px;top:188px" width="17" height="17" viewBox="0 0 17 17"><circle cx="8.5" cy="8.5" r="7.2" stroke="#414d5c" stroke-width="1.8" fill="none"/><circle cx="8.5" cy="5" r="1.2" fill="#414d5c"/><path d="M6.8 7.6 H9 V12 M6.6 12 H10.6" stroke="#414d5c" stroke-width="1.6" fill="none"/></svg>

<!-- ======= Footer ======= -->
<div class="abs" id="footer"></div>
<!--FOOTER_S-->
<div class="t ft" id="f1" style="left:15.93px;font-size:11.5px;letter-spacing:0.413px;top:1034.01px">Comentarios</div>
<div class="t ft" id="f2" style="left:109.42px;color:#b0bac4;font-size:11.5px;letter-spacing:0.212px;top:1034.01px">¿Busca la selección de idiomas? Encuéntrela en la nueva <span style="color:#fff">Unified Settings</span></div>
<svg style="left:506px;top:1032px" width="14" height="14" viewBox="0 0 14 14"><path d="M6 1 H1 V13 H13 V8.2" stroke="#fff" stroke-width="1.9" fill="none" stroke-linejoin="round"/><path d="M8.2 1 H13 V5.8 M12.6 1.4 L5 9" stroke="#fff" stroke-width="1.9" fill="none"/></svg>
<div class="t ft" id="f3" style="left:1255.42px;font-size:11.5px;letter-spacing:0.235px;top:1034.01px">© 2023, Amazon Web Services, Inc. o sus filiales.</div>
<div class="t ft" id="f4" style="left:1549.02px;font-size:11.5px;letter-spacing:0.359px;top:1034.01px">Privacidad</div>
<div class="t ft" id="f5" style="left:1630.42px;font-size:11.5px;letter-spacing:0.357px;top:1034.01px">Términos</div>
<div class="t ft" id="f6" style="left:1705.42px;font-size:11.5px;letter-spacing:0.186px;top:1034.01px">Preferencias de cookies</div>
<!--FOOTER_E-->
</body>
</html>
